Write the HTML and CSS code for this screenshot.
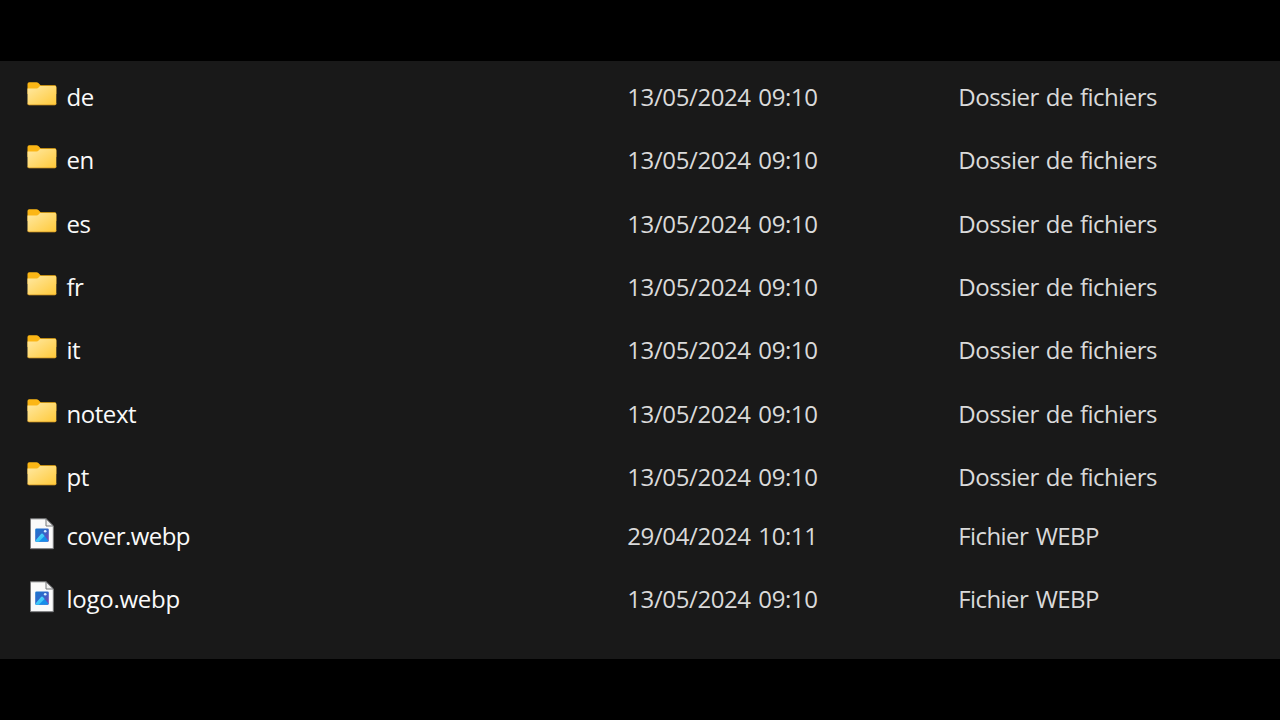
FILE: index.html
```html
<!DOCTYPE html>
<html lang="fr">
<head>
<meta charset="utf-8">
<title>Fichiers</title>
<link rel="stylesheet" href="styles.css">
</head>
<body>
<svg class="defs" aria-hidden="true">
  <defs>
    <linearGradient id="front" x1="0" y1="0" x2="1" y2="1">
      <stop offset="0" stop-color="#ffe9a3"/><stop offset="1" stop-color="#ffc939"/>
    </linearGradient>
    <linearGradient id="photo" x1="0" y1="0" x2="1" y2="1">
      <stop offset="0" stop-color="#1877d0"/><stop offset=".5" stop-color="#3465c8"/><stop offset="1" stop-color="#8a3fae"/>
    </linearGradient>
    <linearGradient id="hill" x1="0" y1="0" x2=".6" y2="1">
      <stop offset="0" stop-color="#54dcfb"/><stop offset="1" stop-color="#35bdf5"/>
    </linearGradient>
    <symbol id="folder" viewBox="0 0 30 24">
      <path d="M.5 2Q.5.3 2.2.3H9.5Q10.6.3 11.4 1.1L13.6 3.2H28Q29.3 3.2 29.3 4.7V12H.5Z" fill="#fbb615"/>
      <path d="M.5 6.4H9.6Q10.8 6.4 11.6 5.5L13 4H28Q29.3 4 29.3 5.5V21.5Q29.3 23 28 23H2Q.5 23 .5 21.5Z" fill="url(#front)"/>
      <path d="M.6 21.4Q.7 22.9 2.2 22.9H27.8Q29.1 22.9 29.2 21.4" fill="none" stroke="#d69a25" stroke-width=".8"/>
    </symbol>
    <symbol id="image" viewBox="0 0 24 32">
      <path d="M.5.8H16L23.3 8V30.7H.5Z" fill="#fafafa" stroke="#77787a"/>
      <path d="M16 .8V8H23.3Z" fill="#eee" stroke="#77787a"/>
      <rect x="5.2" y="10.5" width="13.6" height="13.2" rx="1.3" fill="url(#photo)"/>
      <path d="M5.4 22.8L11.1 16Q12 15.1 12.9 16L18.6 22.8Q18.2 23.7 17.4 23.7H6.6Q5.6 23.7 5.4 22.8Z" fill="#168eea"/>
      <path d="M5.4 22.8L11.1 16Q12 15.1 12.9 16L14.6 18L8.8 23.7H6.6Q5.6 23.7 5.4 22.8Z" fill="url(#hill)"/>
      <circle cx="15.2" cy="13.2" r="1.3" fill="#d7edff"/>
    </symbol>
  </defs>
</svg>
<main class="panel">
  <div class="row"><svg class="icon folder"><use href="#folder"/></svg><span class="name">de</span><span class="date">13/05/2024 09:10</span><span class="type">Dossier de fichiers</span></div>
  <div class="row"><svg class="icon folder"><use href="#folder"/></svg><span class="name">en</span><span class="date">13/05/2024 09:10</span><span class="type">Dossier de fichiers</span></div>
  <div class="row"><svg class="icon folder"><use href="#folder"/></svg><span class="name">es</span><span class="date">13/05/2024 09:10</span><span class="type">Dossier de fichiers</span></div>
  <div class="row"><svg class="icon folder"><use href="#folder"/></svg><span class="name">fr</span><span class="date">13/05/2024 09:10</span><span class="type">Dossier de fichiers</span></div>
  <div class="row"><svg class="icon folder"><use href="#folder"/></svg><span class="name">it</span><span class="date">13/05/2024 09:10</span><span class="type">Dossier de fichiers</span></div>
  <div class="row"><svg class="icon folder"><use href="#folder"/></svg><span class="name">notext</span><span class="date">13/05/2024 09:10</span><span class="type">Dossier de fichiers</span></div>
  <div class="row"><svg class="icon folder"><use href="#folder"/></svg><span class="name">pt</span><span class="date">13/05/2024 09:10</span><span class="type">Dossier de fichiers</span></div>
  <div class="row first-file"><svg class="icon image"><use href="#image"/></svg><span class="name wide">cover.webp</span><span class="date">29/04/2024 10:11</span><span class="type webp">Fichier WEBP</span></div>
  <div class="row"><svg class="icon image"><use href="#image"/></svg><span class="name logo">logo.webp</span><span class="date">13/05/2024 09:10</span><span class="type webp">Fichier WEBP</span></div>
</main>
</body>
</html>
```
FILE: styles.css
```css
body {
  margin: 0;
  padding: 61px 0;
  height: 598px;
  background: #000;
  overflow: hidden;
  font-family: "Open Sans", "Noto Sans", sans-serif;
}
.defs { position: absolute; width: 0; height: 0; }
.panel {
  box-sizing: border-box;
  height: 598px;
  padding: 4.1px 0 0 27px;
  background: #191919;
}
.row {
  display: grid;
  grid-template-columns: 39.5px 560.8px 331px 1fr;
  align-items: center;
  height: 63.4px;
  font-size: 24px;
  line-height: 34px;
  white-space: nowrap;
  color: #dadada;
}
.first-file { margin-top: -4.7px; }
.folder { width: 30px; height: 24px; margin-bottom: 6px; }
.image { width: 24px; height: 32px; margin: 0 0 4px 3px; }
.name { color: #fafafa; letter-spacing: -0.45px; }
.name.wide { letter-spacing: -0.55px; }
.name.logo { letter-spacing: -0.25px; }
.date { letter-spacing: -0.4px; word-spacing: 1.8px; }
.type { letter-spacing: -0.5px; word-spacing: 1.2px; }
.webp { letter-spacing: -0.6px; word-spacing: 2px; }
```
